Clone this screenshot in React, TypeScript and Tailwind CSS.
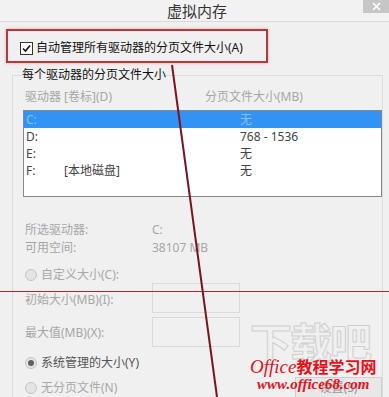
import React from "react";

const font = "font-['Noto_Sans','Noto_Sans_CJK_SC',sans-serif]";

const drives = [
  { name: "C:", label: "", size: "无", selected: true },
  { name: "D:", label: "", size: "768 - 1536", selected: false },
  { name: "E:", label: "", size: "无", selected: false },
  { name: "F:", label: "[本地磁盘]", size: "无", selected: false },
];

const Radio: React.FC<{ checked?: boolean; label: string }> = ({ checked, label }) => (
  <div className="flex items-center h-[16px]">
    <span className="w-[12px] h-[12px] rounded-full border border-[#c4c4c4] bg-[#e4e4e4] flex items-center justify-center">
      {checked && <span className="w-[6px] h-[6px] rounded-full bg-[#606060]" />}
    </span>
    <span className={`ml-[4px] text-[12px] leading-[16px] ${checked ? "text-[#555]" : "text-[#a8a8a8]"}`}>
      {label}
    </span>
  </div>
);

export default function App() {
  return (
    <div className={`relative w-[389px] h-[397px] overflow-hidden bg-[#f0f0f0] ${font}`}>
      {/* title bar */}
      <div className="relative h-[22px] border-b border-[#dadada] bg-[#f2f2f2] flex items-center justify-center">
        <span className="text-[15px] leading-[20px] text-[#333] ml-[5px]">虚拟内存</span>
        <div className="absolute right-0 top-0 w-[26px] h-[13px] bg-[#c6c6c6] flex items-center justify-center">
          <svg width="9" height="9" viewBox="0 0 9 9">
            <path d="M1 1L8 8M8 1L1 8" stroke="#fff" strokeWidth="1.6" />
          </svg>
        </div>
      </div>

      {/* auto manage */}
      <div className="mt-[7px] ml-[6px] w-[262px] h-[34px] border-2 border-[#b03a3e] shadow-[0_0_3px_#e9a6a6] flex items-center pl-[12px] pt-[4px]">
        <span className="w-[13px] h-[13px] border border-[#333] bg-white flex items-center justify-center">
          <svg width="11" height="11" viewBox="0 0 11 11">
            <path d="M2 5.5L4.5 8L9 2.5" stroke="#111" strokeWidth="1.6" fill="none" />
          </svg>
        </span>
        <span className="ml-[3px] text-[12px] leading-[16px] text-[#111]">自动管理所有驱动器的分页文件大小(A)</span>
      </div>

      {/* group box */}
      <fieldset className="mt-[4px] ml-[12px] w-[368px] h-[340px] border border-[#dcdcdc] border-b-0">
        <legend className="ml-[9px] text-[12px] leading-[16px] text-[#111]">每个驱动器的分页文件大小</legend>

        <div className="mt-[6px] pl-[12px] flex text-[12px] leading-[16px] text-[#a6a6a6]">
          <span className="w-[180px]">驱动器 [卷标](D)</span>
          <span>分页文件大小(MB)</span>
        </div>

        <div className="mt-[5px] ml-[10px] w-[359px] h-[87px] border border-[#828790] bg-white">
          {drives.map((d) => (
            <div
              key={d.name}
              className={`h-[17px] flex items-center text-[12px] leading-[17px] ${
                d.selected ? "bg-[#3393f4] text-[#86bdf5]" : "text-[#444]"
              }`}
            >
              <span className="w-[40px] pl-[2px]">{d.name}</span>
              <span className="w-[176px]">{d.label}</span>
              <span>{d.size}</span>
            </div>
          ))}
        </div>

        <div className="mt-[24px] pl-[12px] text-[12px] leading-[18px] text-[#a6a6a6]">
          <div className="flex">
            <span className="w-[127px]">所选驱动器:</span>
            <span>C:</span>
          </div>
          <div className="flex">
            <span className="w-[127px]">可用空间:</span>
            <span>38107 MB</span>
          </div>
        </div>

        <div className="mt-[10px] pl-[12px]">
          <Radio label="自定义大小(C):" />
        </div>

        <div className="pl-[12px] flex items-center">
          <span className="w-[127px] text-[12px] leading-[16px] text-[#a6a6a6] pt-[4px]">初始大小(MB)(I):</span>
          <span className="w-[88px] h-[30px] border border-[#dadada]" />
        </div>
        <div className="mt-[4px] pl-[12px] flex items-center">
          <span className="w-[127px] text-[12px] leading-[16px] text-[#a6a6a6] pt-[2px]">最大值(MB)(X):</span>
          <span className="w-[88px] h-[30px] border border-[#dadada]" />
        </div>

        <div className="mt-[8px] pl-[12px]">
          <Radio checked label="系统管理的大小(Y)" />
        </div>
        <div className="mt-[6px] pl-[12px] h-[22px] flex items-center justify-between">
          <Radio label="无分页文件(N)" />
          <span className="w-[87px] h-[22px] border border-[#cfcfcf] bg-[#e8e8e8] flex items-center justify-center text-[12px] leading-[14px] text-[#9a9a9a]">
            设置(S)
          </span>
        </div>
      </fieldset>

      {/* watermark */}
      <div className="absolute left-[250px] top-[324px] text-[42px] leading-[34px] font-bold tracking-[-2px] text-transparent [-webkit-text-stroke:1px_#cfcfcf] font-['Noto_Sans_CJK_SC',sans-serif]">
        下载吧
      </div>
      <div className="absolute left-[250px] top-[357px] flex items-baseline text-[#e8101a]">
        <span className="font-['Liberation_Serif',serif] italic text-[19px] leading-[19px]">Office</span>
        <span className="font-['Noto_Sans_CJK_SC',sans-serif] font-bold text-[16px] leading-[19px]">教程学习网</span>
      </div>
      <div className="absolute left-[257px] top-[377px] font-['Liberation_Serif',serif] italic font-bold text-[15px] leading-[15px] text-[#e8101a]">
        www.office68.com
      </div>

      {/* annotation lines */}
      <svg className="absolute left-0 top-0" width="389" height="397">
        <line x1="0" y1="291.5" x2="389" y2="291.5" stroke="#b0262a" strokeWidth="1" />
        <line x1="172" y1="65" x2="217" y2="397" stroke="#7c1420" strokeWidth="2" />
      </svg>
    </div>
  );
}
